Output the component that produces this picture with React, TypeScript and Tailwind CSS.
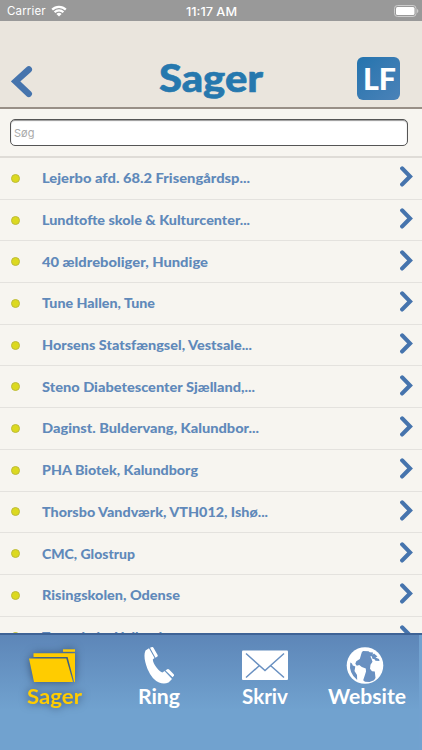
import type { ReactNode } from "react";

interface Sag {
  navn: string;
  // rendered width of the title in px
  width: number;
}

const sager: Sag[] = [
  { navn: "Lejerbo afd. 68.2 Frisengårdsp...", width: 208 },
  { navn: "Lundtofte skole & Kulturcenter...", width: 208 },
  { navn: "40 ældreboliger, Hundige", width: 166 },
  { navn: "Tune Hallen, Tune", width: 113 },
  { navn: "Horsens Statsfængsel, Vestsale...", width: 210 },
  { navn: "Steno Diabetescenter Sjælland,...", width: 213 },
  { navn: "Daginst. Buldervang, Kalundbor...", width: 217 },
  { navn: "PHA Biotek, Kalundborg", width: 156 },
  { navn: "Thorsbo Vandværk, VTH012, Ishø...", width: 226 },
  { navn: "CMC, Glostrup", width: 93 },
  { navn: "Risingskolen, Odense", width: 138 },
  { navn: "Tune skole, Hallund", width: 120 },
];

interface FittedTextProps {
  children: string;
  width: number;
  height: number;
  baseline: number;
  className: string;
}

// Single line of text stretched to a fixed width
function FittedText({ children, width, height, baseline, className }: FittedTextProps) {
  return (
    <svg width={width} height={height} className={`block shrink-0 overflow-visible ${className}`}>
      <text x="0" y={baseline} textLength={width} lengthAdjust="spacingAndGlyphs" fill="currentColor">
        {children}
      </text>
    </svg>
  );
}

function StatusBar() {
  return (
    <div className="grid h-[21px] shrink-0 grid-cols-3 items-center bg-[#999] px-[7px] pt-px font-[Inter,sans-serif] text-[11.5px] text-white">
      <div className="flex items-center gap-[5px]">
        <span className="pt-px tracking-[0.15px]">Carrier</span>
        <svg width="16" height="12" viewBox="0 0 16 12" fill="none" stroke="currentColor" strokeWidth="2.2">
          <path d="M1.200 4.600a9.600 9.600 0 0 1 13.600 0M3.600 7.200a6.200 6.200 0 0 1 8.800 0" />
          <path d="M8 11.600 5.400 9a3.700 3.700 0 0 1 5.200 0z" fill="currentColor" stroke="none" />
        </svg>
      </div>
      <FittedText width={51} height={14} baseline={11.5} className="justify-self-center font-medium">
        11:17 AM
      </FittedText>
      <svg className="mr-[-5px] justify-self-end" width="26" height="12" viewBox="0 0 26 12">
        <rect x="0.5" y="0.5" width="21.500" height="11" rx="3" fill="none" stroke="#ccc" />
        <rect x="2" y="2" width="18.500" height="8" rx="1.500" fill="#fff" />
        <path d="M23 4v4q1.400-.6 1.400-2T23 4z" fill="#ccc" />
      </svg>
    </div>
  );
}

function Header() {
  return (
    <header className="flex h-[88px] shrink-0 items-start justify-between border-b-2 border-[#988f86] bg-[#eae5dd] pr-[22px] pl-[11px]">
      <svg className="mt-[44px]" width="22" height="33" viewBox="0 0 22 33" fill="none" stroke="#4674ad" strokeWidth="6.400" strokeLinecap="round" strokeLinejoin="miter">
        <path d="M17.800 4.500 4.600 16.400 17.800 28.800" />
      </svg>
      <FittedText width={104} height={50} baseline={35.5} className="mt-[35px] ml-[32px] font-[Lato,sans-serif] text-[38px] font-black text-[#2678ae] [stroke-width:0.6px] stroke-[#2678ae]">
        Sager
      </FittedText>
      <div className="mt-[36px] flex size-[43px] items-center justify-center rounded-[6px] bg-linear-to-br from-[#2374ae] to-[#4a82b8]">
        <FittedText width={33} height={24} baseline={23} className="ml-[2px] font-[Lato,sans-serif] text-[31px] font-black text-white">
          LF
        </FittedText>
      </div>
    </header>
  );
}

function SagRow({ navn, width }: Sag) {
  return (
    <li className="flex h-[41.7px] items-center border-b-[1.5px] border-[#e4e2de] pr-[9px] pl-[11px]">
      <span className="size-[9px] shrink-0 rounded-full border border-[#bdbb3a] bg-[#dcd91f]" />
      <FittedText width={width} height={20} baseline={15} className="ml-[22px] font-[Lato,sans-serif] text-[14px] font-black text-[#6089ba]">
        {navn}
      </FittedText>
      <svg className="mt-[-3px] ml-auto" width="13" height="21" viewBox="0 0 13 21" fill="none" stroke="#4674ad" strokeWidth="4.200" strokeLinecap="round">
        <path d="M2.200 2.400 10 10.400 2.200 18.400" />
      </svg>
    </li>
  );
}

interface TabProps {
  label: string;
  width: number;
  className: string;
  children: ReactNode;
}

function Tab({ label, width, className, children }: TabProps) {
  return (
    <button type="button" className={`flex flex-col items-center ${className}`}>
      {children}
      <FittedText width={width} height={26} baseline={20} className="font-[Lato,sans-serif] text-[21px] font-bold">
        {label}
      </FittedText>
    </button>
  );
}

function TabBar() {
  return (
    <nav className="flex h-[117px] shrink-0 border-t-2 border-[#3e6396] bg-[linear-gradient(#5d86b8,#71a2cf_75px)]">
      <div className="flex w-[419px] shrink-0 pt-[12px]">
        <Tab label="Sager" width={55} className="w-[108px] text-[#fc0] drop-shadow-[0_0_4px_#344f70]">
          <svg width="48" height="37" viewBox="0 0 48 37" fill="currentColor" className="ml-[-4px]">
            <path d="M35 2.300h12v2.500H35z" />
            <path d="M5.500 6.300h41.500v28.700h-.8L39.600 10H5.500z" />
            <path d="M1 11.400h37.300L45 35H6z" />
          </svg>
        </Tab>
        <Tab label="Ring" width={42} className="w-[102px] text-white">
          <svg width="30" height="37" viewBox="0 0 30 37" fill="currentColor">
            <path d="M1.500 3.500 5 1.300 10.500 11 8.800 12.500Q9 16 12.500 20.500q3.500 4.500 6 5L20.500 24l7.500 8-3.500 3.500Q20 37.500 15 35.500 8 32.500 3.500 22-1.300 9.500 1.500 3.500z" />
            <path d="M6 .8 8 .1q1-.3 1.600.8l4 7q.6 1.200-.5 1.900L11.500 10.700zM21.500 23.500l1.700-1.200q1-.7 1.900.3l4.600 4.700q.9 1-.1 1.800l-1 1.200z" />
          </svg>
        </Tab>
        <Tab label="Skriv" width={46} className="w-[110px] text-white">
          <svg width="46" height="37" viewBox="0 0 46 37" fill="none">
            <rect y="3.500" width="46" height="29.500" rx="1" fill="currentColor" />
            <path d="M4 6.500 23 23.500 42 6.500M4 30.500l13.500-12M42 30.500l-13.500-12" stroke="#6990c1" strokeWidth="1.500" />
          </svg>
        </Tab>
        <Tab label="Website" width={78} className="w-[94px] text-white">
          <svg width="38" height="37" viewBox="0 0 38 37" className="ml-[-4px]">
            <circle cx="19" cy="18.500" r="18.300" fill="currentColor" />
            <g fill="#6990c1">
              <path d="M15.800 5.200 17 4l5.500.2 1.300 1 3.200.3-.5 3.500-2.200.5 1.200 2.200 1 3-2 3-.5 4 2 2.500 2.800.3.700 6.500-1.500 2.200-4.500 1.800-4.500-.2-1.800-1.500 1.800-5.500 1-3.200-.2-3.100-4-1.500-2.500-2-2.500.7-1.500-2 1-2.500 3.500-2.200z" />
              <path d="M4.300 15.500q2 .5 2.500 3l2.500 1-.8 4.500 2.500 4 .2 5Q2.500 26 4.300 15.500z" />
              <path d="m25.500 8.500 2.500-2 3.500 3-2 1 3.500 1.500.5 2-4-.2-1-1.500-2-.5z" />
            </g>
          </svg>
        </Tab>
      </div>
      <div className="flex-1 bg-[#72a2d0]" />
    </nav>
  );
}

export default function App() {
  return (
    <div className="flex h-[750px] w-[422px] flex-col overflow-hidden bg-[#f7f5f0]">
      <StatusBar />
      <Header />
      <div className="h-[49px] shrink-0 border-b-2 border-[#dfdcd7] px-[10px] pr-[14px] pt-[10px]">
        <input
          type="text"
          placeholder="Søg"
          className="block h-[27px] w-full rounded-[5px] border border-[#555] bg-white px-[3px] font-[Inter,sans-serif] text-[11px] shadow-[inset_0_1px_1px_#999] placeholder:text-[#aaa]"
        />
      </div>
      <ul className="min-h-0 flex-1 overflow-hidden">
        {sager.map((sag) => (
          <SagRow key={sag.navn} {...sag} />
        ))}
      </ul>
      <TabBar />
    </div>
  );
}
